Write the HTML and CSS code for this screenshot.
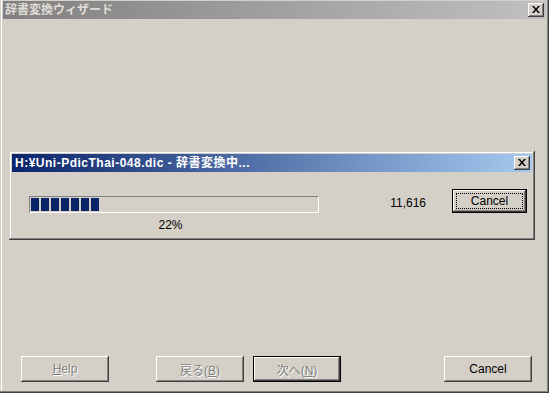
FILE: index.html
```html
<!DOCTYPE html>
<html lang="ja">
<head>
  <meta charset="UTF-8">
  <title>辞書変換ウィザード</title>
  <link rel="stylesheet" href="styles.css">
</head>
<body>
  <div class="window">
    <!-- タイトルバー -->
    <div class="titlebar inactive">
      <span class="title">辞書変換ウィザード</span>
      <span class="caption-btn">
        <svg width="8" height="7" viewBox="0 0 8 7"><path d="M0 0h2l2 2.5 2-2.5h2L5 3.5 8 7H6L4 4.5 2 7H0l3-3.5z" fill="#000"/></svg>
      </span>
    </div>

    <div class="client">
      <div class="buttons">
        <button class="btn disabled"><u>H</u>elp</button>
        <button class="btn disabled back">戻る(<u>B</u>)</button>
        <button class="btn disabled default next">次へ(<u>N</u>)</button>
        <button class="btn cancel">Cancel</button>
      </div>
    </div>

    <!-- 変換中ダイアログ -->
    <div class="dialog">
      <div class="titlebar active">
        <span class="title">H:¥Uni-PdicThai-048.dic - 辞書変換中...</span>
        <span class="caption-btn">
          <svg width="8" height="7" viewBox="0 0 8 7"><path d="M0 0h2l2 2.5 2-2.5h2L5 3.5 8 7H6L4 4.5 2 7H0l3-3.5z" fill="#000"/></svg>
        </span>
      </div>
      <div class="dialog-body">
        <div class="progress">
          <div class="bar">
            <span class="block"></span>
            <span class="block"></span>
            <span class="block"></span>
            <span class="block"></span>
            <span class="block"></span>
            <span class="block"></span>
            <span class="block"></span>
          </div>
          <div class="percent">22%</div>
        </div>
        <div class="count">11,616</div>
        <button class="btn default focus">Cancel</button>
      </div>
    </div>
  </div>
</body>
</html>
```

FILE: styles.css
```css
body {
  margin: 0;
  background: #d4d0c8;
  font-family: "Liberation Sans", "Noto Sans CJK JP", sans-serif;
  font-size: 12px;
}
.window {
  position: relative;
  width: 549px;
  height: 393px;
  box-sizing: border-box;
  padding: 1px 3px 3px 3px;
  background: #d4d0c8;
  display: flex;
  flex-direction: column;
  box-shadow: inset -1px -1px #404040, inset -2px -2px #808080, inset 1px 0 #d4d0c8, inset 2px 0 #fff;
}
.titlebar {
  height: 18px;
  display: flex;
  align-items: center;
  justify-content: space-between;
  padding: 0 2px 0 2px;
  font-weight: bold;
  white-space: nowrap;
}
.titlebar.inactive {
  background: linear-gradient(to right, #808080, #c0c0c0);
  color: #e0ddd6;
}
.titlebar.active {
  background: linear-gradient(to right, #0a246a, #a6caf0);
  color: #fff;
  padding-left: 3px;
}
.titlebar.active .title {
  letter-spacing: 0.5px;
}
.title {
  line-height: 18px;
}
.caption-btn {
  width: 16px;
  height: 14px;
  box-sizing: border-box;
  background: #d4d0c8;
  display: flex;
  align-items: center;
  justify-content: center;
  padding: 0 1px 1px 0;
  box-shadow: inset -1px -1px #404040, inset 1px 1px #fff, inset -2px -2px #808080;
}
.client {
  flex: 1;
  display: flex;
  flex-direction: column;
  justify-content: flex-end;
  padding: 0 14px 8px 18px;
}
.buttons {
  display: flex;
}
.btn {
  width: 88px;
  height: 26px;
  box-sizing: border-box;
  border: none;
  background: #d4d0c8;
  font-family: "Liberation Sans", "Noto Sans CJK JP", sans-serif;
  font-size: 12px;
  color: #000;
  padding: 0;
  box-shadow: inset -1px -1px #404040, inset 1px 1px #fff, inset -2px -2px #808080;
}
.btn.disabled {
  color: #808080;
  text-shadow: 1px 1px #fff;
}
.btn.default {
  border: 1px solid #000;
}
.back {
  margin-left: 47px;
}
.next {
  margin-left: 9px;
}
.cancel {
  margin-left: auto;
}
.dialog {
  position: absolute;
  left: 9px;
  top: 151px;
  width: 526px;
  box-sizing: border-box;
  padding: 3px;
  background: #d4d0c8;
  box-shadow: inset -1px -1px #404040, inset 1px 1px #d4d0c8, inset -2px -2px #808080, inset 2px 2px #fff;
}
.dialog-body {
  display: flex;
  align-items: flex-start;
  padding: 0 0 5px 17px;
}
.progress {
  margin-top: 24px;
  width: 290px;
}
.bar {
  height: 17px;
  box-sizing: border-box;
  border: 1px solid;
  border-color: #808080 #fff #fff #808080;
  padding: 1px;
  display: flex;
  gap: 2px;
}
.block {
  width: 8px;
  background: #0a246a;
}
.percent {
  margin-top: 5px;
  line-height: 14px;
  text-align: center;
  padding-right: 7px;
}
.count {
  width: 107px;
  margin-top: 24px;
  line-height: 14px;
  text-align: right;
}
.btn.focus {
  width: 75px;
  height: 24px;
  margin-left: 26px;
  margin-top: 17px;
  outline: 1px dotted #000;
  outline-offset: -5px;
}
```
